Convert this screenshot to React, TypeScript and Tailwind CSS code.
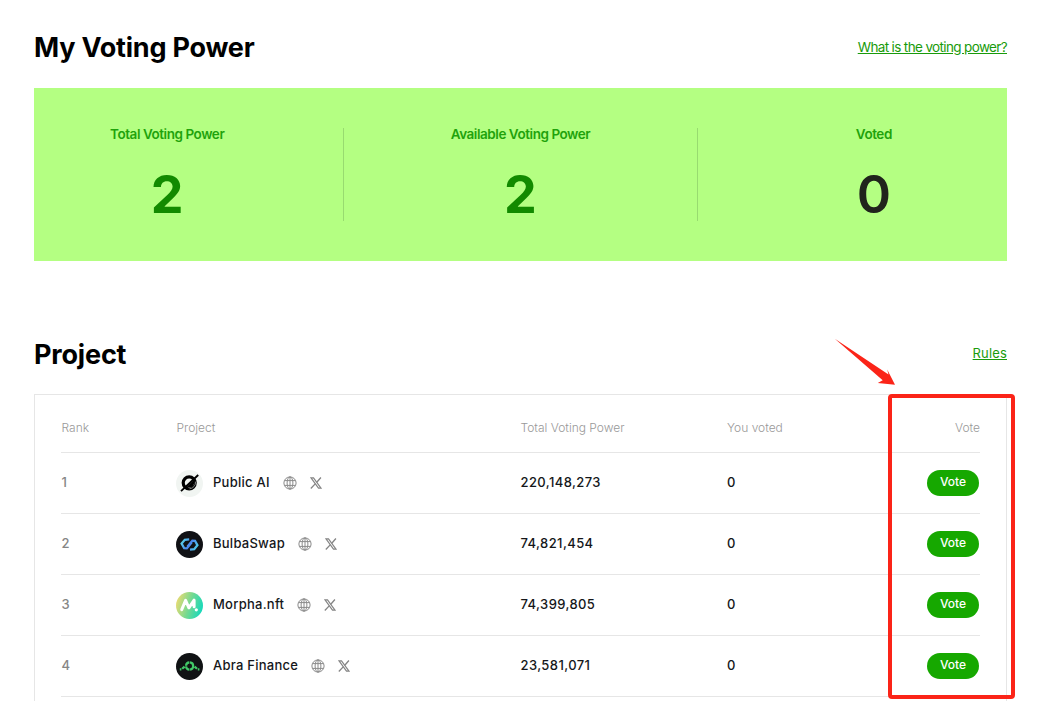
import { ReactNode } from "react";

interface Project {
  rank: number;
  name: string;
  logo: ReactNode;
  power: string;
  voted: number;
}

const PublicAiLogo = () => (
  <svg width="27" height="27" viewBox="0 0 27 27" fill="none">
    <circle cx="13.5" cy="13.5" r="13.5" fill="#f1f5f2" />
    <circle cx="13.2" cy="12.8" r="6" fill="#f1f5f2" stroke="#000" strokeWidth="3.2" />
    <path d="M17.6 11.4a5 5 0 0 1-5.6 6.2M19.6 11.6a6.6 6.6 0 0 1-6.2 7.2" stroke="#f1f5f2" strokeWidth=".5" />
    <path d="M10 17.4l8-7.6v3.4a5 5 0 0 1-4.6 4.4Z" fill="#000" />
    <path d="M5 21.1 22.2 5" stroke="#000" strokeWidth="1.9" />
  </svg>
);

const BulbaSwapLogo = () => (
  <svg width="27" height="27" viewBox="0 0 27 27" fill="none">
    <defs>
      <linearGradient id="bulba" x1="5" y1="8" x2="22" y2="19" gradientUnits="userSpaceOnUse">
        <stop stopColor="#5ae0e8" />
        <stop offset=".5" stopColor="#4b84ee" />
        <stop offset="1" stopColor="#4fdce8" />
      </linearGradient>
    </defs>
    <circle cx="13.5" cy="13.5" r="13.5" fill="#101115" />
    <path d="M13.2 8.4 8.8 8.8 5.6 12.6l2.6 4.6 2.6.2 5-6.2" stroke="url(#bulba)" strokeWidth="2.3" />
    <path d="M11.4 15.8l5-6.2 2.6.2 2.4 4.4-3.2 4-4.2.4" stroke="url(#bulba)" strokeWidth="2.3" />
  </svg>
);

const MorphaLogo = () => (
  <svg width="27" height="27" viewBox="0 0 27 27" fill="none">
    <defs>
      <linearGradient id="morpha" x1="0" y1="9" x2="27" y2="17" gradientUnits="userSpaceOnUse">
        <stop stopColor="#eadb72" />
        <stop offset=".5" stopColor="#74d991" />
        <stop offset="1" stopColor="#12d9bd" />
      </linearGradient>
    </defs>
    <circle cx="13.5" cy="13.5" r="13.5" fill="url(#morpha)" />
    <path d="M5.7 17.6 9.6 8.4l3.3 7.4 5.2-7.6v6.6" stroke="#fff" strokeWidth="3" strokeLinecap="round" strokeLinejoin="round" />
    <circle cx="20.3" cy="17.8" r="1.6" fill="#fff" />
  </svg>
);

const AbraLogo = () => (
  <svg width="27" height="27" viewBox="0 0 27 27" fill="none">
    <circle cx="13.5" cy="13.5" r="13.5" fill="#101214" />
    <circle cx="13.6" cy="13" r="3.6" stroke="#42c968" strokeWidth="2.2" strokeDasharray="5 .65" />
    <path d="M3.8 16.4h1.6M6.2 15.8l2.4-2.2M23.4 16.4h-1.6M21 15.8l-2.4-2.2" stroke="#42c968" strokeWidth="2.2" />
  </svg>
);

const GlobeIcon = () => (
  <svg className="-mt-px" width="14" height="14" viewBox="0 0 14 14" fill="none" stroke="#8a8a8a" strokeWidth="1">
    <circle cx="7" cy="7" r="6.1" />
    <ellipse cx="7" cy="7" rx="2.9" ry="6.1" />
    <path d="M7 .8v12.4M1.5 4.6h11M1.5 9.4h11" />
  </svg>
);

const XIcon = () => (
  <svg width="12" height="12" viewBox="0 0 12 12" fill="none" stroke="#858585">
    <path d="M1 .9h2.5l7.5 10.2H8.5L1 .9Z" strokeWidth="1.2" />
    <path d="M10.9.5 6.8 5.2M5.2 6.9.8 11.5" strokeWidth="1.3" />
  </svg>
);

const projects: Project[] = [
  { rank: 1, name: "Public AI", logo: <PublicAiLogo />, power: "220,148,273", voted: 0 },
  { rank: 2, name: "BulbaSwap", logo: <BulbaSwapLogo />, power: "74,821,454", voted: 0 },
  { rank: 3, name: "Morpha.nft", logo: <MorphaLogo />, power: "74,399,805", voted: 0 },
  { rank: 4, name: "Abra Finance", logo: <AbraLogo />, power: "23,581,071", voted: 0 },
];

const stats = [
  { label: "Total Voting Power", value: 2, color: "font-bold text-[#128a00]" },
  { label: "Available Voting Power", value: 2, color: "font-bold text-[#128a00]" },
  { label: "Voted", value: 0, color: "font-semibold text-[#20241c]" },
];

const columns = "grid grid-cols-[115px_344px_207px_1fr] items-center border-b border-[#e6e6e6]";

const ProjectRow = ({ project }: { project: Project }) => (
  <div className={`${columns} h-[61px] text-[13px] font-medium tracking-[0.4px] text-[#15171a]`}>
    <div className="pl-[0.5px] text-[#858585]">{project.rank}</div>
    <div className="flex items-center">
      {project.logo}
      <span className="ml-[10px] mr-[13px] tracking-[0.25px]">{project.name}</span>
      <GlobeIcon />
      <span className="ml-[13px]"><XIcon /></span>
    </div>
    <div className="pl-[0.5px]">{project.power}</div>
    <div className="flex items-center justify-between">
      <span>{project.voted}</span>
      <button className="mr-px h-[26px] w-[52px] rounded-full bg-[#16a800] pb-0.5 text-[12px] tracking-normal text-white">
        Vote
      </button>
    </div>
  </div>
);

const App = () => {
  return (
    <div className="relative h-[701px] overflow-hidden bg-white pl-[34px] pr-10 font-['Inter',sans-serif]">
      <div className="flex h-[88px] items-center justify-between pt-[7px]">
        <h1 className="text-[27px] font-bold leading-none tracking-[-0.22px] text-black">My Voting Power</h1>
        <a className="text-[13.5px] tracking-[-0.64px] text-[#199b0b] underline">What is the voting power?</a>
      </div>

      <div className="grid h-[173px] grid-cols-3 gap-[87px] bg-[#b4ff82] py-10">
        {stats.map((s, i) => (
          <div key={s.label} className="relative flex flex-col items-center">
            <div className="mt-[-3px] whitespace-nowrap text-[13.5px] font-semibold leading-[18px] tracking-[-0.45px] text-[#1fa30c]">
              {s.label}
            </div>
            <div className={`mt-[22px] text-[52px] leading-[60px] ${s.color}`}>{s.value}</div>
            {i < 2 && <div className="absolute -right-[44px] top-0 h-[93px] w-px bg-[#98db70]" />}
          </div>
        ))}
      </div>

      <div className="mt-[79px] flex h-[54px] items-start justify-between">
        <h2 className="text-[27px] font-bold leading-[30px] tracking-[-0.18px] text-black">Project</h2>
        <a className="mt-[3px] text-[13px] leading-5 tracking-[0.15px] text-[#199b0b] underline">Rules</a>
      </div>

      <div className="h-[320px] border border-[#e6e6e6] pl-[26px] pr-[26px]">
        <div className={`${columns} h-[58px] pt-[9px] text-[12px] font-light text-[#999]`}>
          <div className="pl-[0.5px]">Rank</div>
          <div className="pl-[0.5px]">Project</div>
          <div className="pl-[0.5px]">Total Voting Power</div>
          <div className="flex justify-between">
            <span>You voted</span>
            <span>Vote</span>
          </div>
        </div>
        {projects.map((p) => (
          <ProjectRow key={p.rank} project={p} />
        ))}
      </div>

      {/* callout around the vote column */}
      <div className="absolute left-[888px] top-[394px] h-[305px] w-[127px] rounded-[4px] border-4 border-[#fb2418]" />
      <svg className="absolute left-[834px] top-[338px]" width="62" height="48" viewBox="0 0 62 48">
        <path d="M.8.8 54.5 36.5 53.2 31.4 61 46.8 43.8 45 48.7 42.3Z" fill="#fb2418" />
      </svg>
    </div>
  );
};

export default App;
